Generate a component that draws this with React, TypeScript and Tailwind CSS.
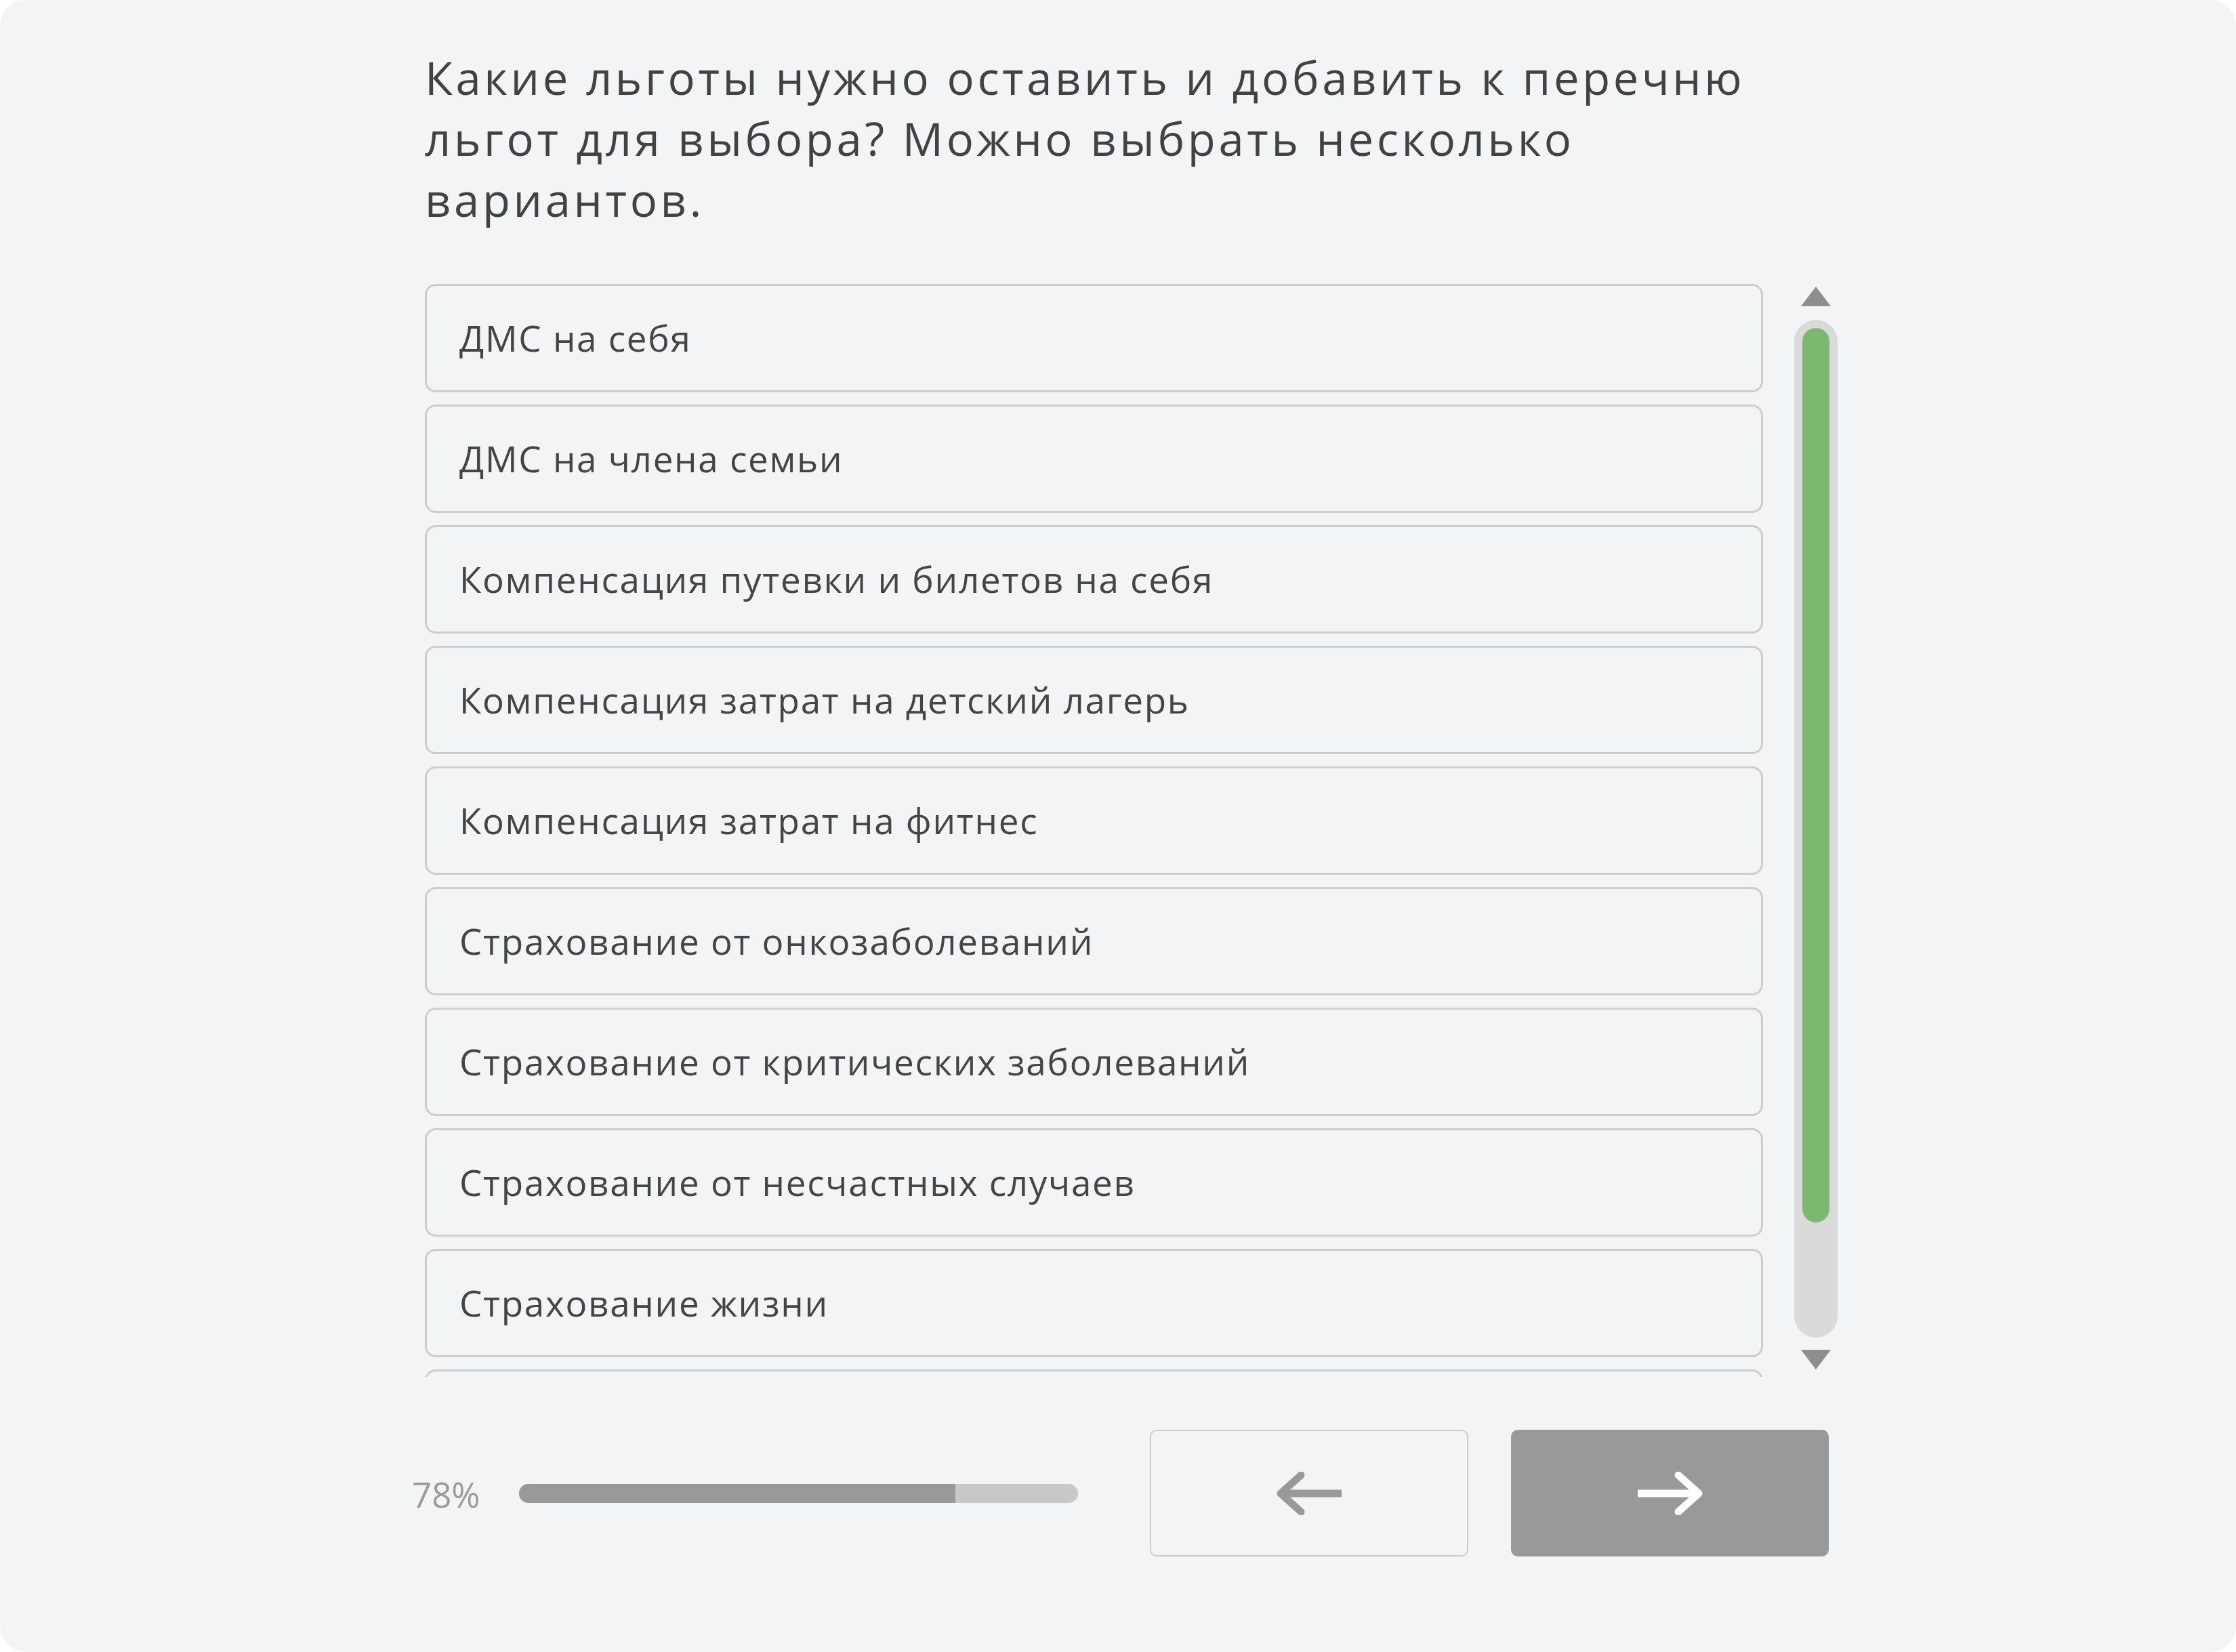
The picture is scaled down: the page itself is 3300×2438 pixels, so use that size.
import React from "react";

const options = [
  "ДМС на себя",
  "ДМС на члена семьи",
  "Компенсация путевки и билетов на себя",
  "Компенсация затрат на детский лагерь",
  "Компенсация затрат на фитнес",
  "Страхование от онкозаболеваний",
  "Страхование от критических заболеваний",
  "Страхование от несчастных случаев",
  "Страхование жизни",
  "Компенсация затрат на обучение",
];

const progress = 78;

function Arrow({ dir, color }: { dir: "left" | "right"; color: string }) {
  return (
    <svg width="100" height="64" viewBox="0 0 100 64" fill="none" className={dir === "right" ? "rotate-180" : ""}>
      <path d="M98 32H10" stroke={color} strokeWidth="11" />
      <path d="M38 5L8 32L38 59" stroke={color} strokeWidth="11" strokeLinecap="round" strokeLinejoin="round" />
    </svg>
  );
}

function Triangle({ up }: { up?: boolean }) {
  return (
    <svg width="44" height="29" viewBox="0 0 44 29">
      <polygon points={up ? "22,0 44,29 0,29" : "0,0 44,0 22,29"} fill="#8e8e8e" />
    </svg>
  );
}

export default function App() {
  return (
    <div className="min-h-screen bg-white font-['Open_Sans','Noto_Sans',sans-serif]">
      <div className="w-[3300px] h-[2438px] rounded-[38px] bg-gray-100 pl-[627px] pt-[69px]">
        {/* Question */}
        <h1 className="w-[2000px] text-[67px] leading-[90px] tracking-[4.6px] font-normal text-[#424242]">
          Какие льготы нужно оставить и добавить к перечню льгот для выбора? Можно выбрать несколько вариантов.
        </h1>

        {/* Options list with custom scrollbar */}
        <div className="mt-[80px] flex gap-[46px]">
          <div className="w-[1975px] h-[1613px] overflow-hidden flex flex-col gap-[18px]">
            {options.map((o) => (
              <div
                key={o}
                className="h-[160px] shrink-0 flex items-center pl-[48px] border-[3px] border-[#cdcdcd] rounded-[16px] text-[53px] tracking-[1.7px] text-[#454545]"
              >
                {o}
              </div>
            ))}
          </div>

          <div className="w-[64px] pt-[4px] flex flex-col items-center">
            <Triangle up />
            <div className="mt-[20px] w-[64px] h-[1502px] rounded-full bg-[#dadada] p-[12px]">
              <div className="h-[1320px] rounded-full bg-[#7cb870]" />
            </div>
            <div className="mt-[18px]">
              <Triangle />
            </div>
          </div>
        </div>

        {/* Footer: progress + navigation */}
        <div className="-ml-[19px] mt-[78px] flex items-center">
          <span className="w-[101px] text-[51px] text-[#9b9b9b] pt-[4px]">{progress}%</span>
          <div className="ml-[57px] w-[825px] h-[28px] rounded-full bg-[#c8c8c8] overflow-hidden">
            <div className="h-full bg-[#999999]" style={{ width: `${progress}%` }} />
          </div>
          <button className="ml-[106px] w-[470px] h-[187px] rounded-[10px] border-2 border-[#cccccc] flex items-center justify-center">
            <Arrow dir="left" color="#999999" />
          </button>
          <button className="ml-[63px] w-[469px] h-[187px] rounded-[10px] bg-[#999999] flex items-center justify-center">
            <Arrow dir="right" color="#ffffff" />
          </button>
        </div>
      </div>
    </div>
  );
}
